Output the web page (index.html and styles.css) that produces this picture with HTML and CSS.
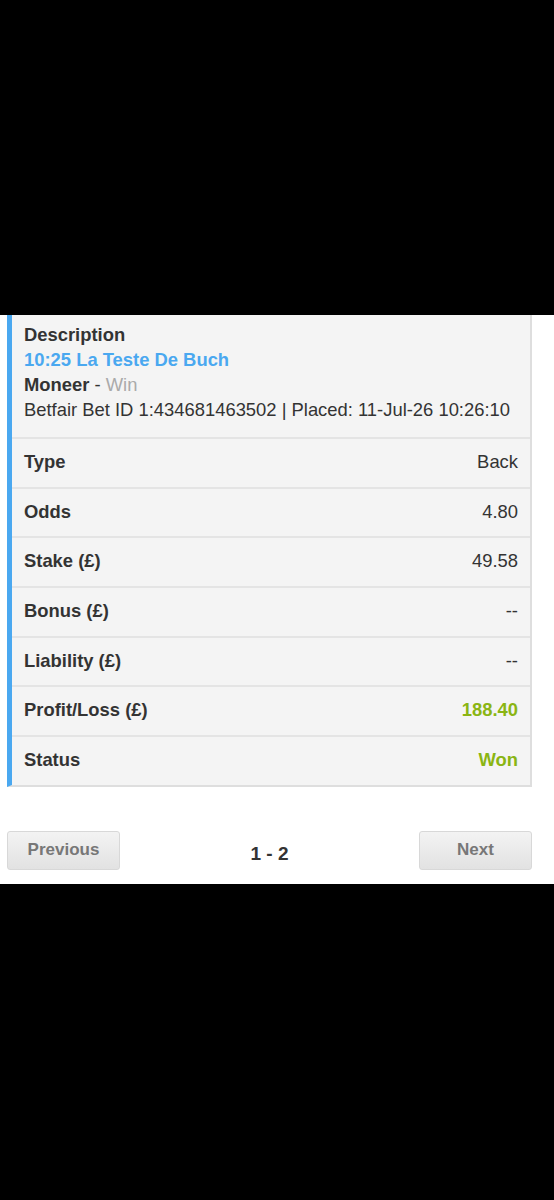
FILE: index.html
```html
<!DOCTYPE html>
<html>
<head>
<meta charset="utf-8">
<link rel="stylesheet" href="styles.css">
</head>
<body>
<div class="top"></div>
<div class="page">
  <div class="card">
    <div class="desc">
      <div class="desc-title">Description</div>
      <div class="event">10:25 La Teste De Buch</div>
      <div class="sel"><b>Moneer</b> - <span class="mkt">Win</span></div>
      <div class="betid">Betfair Bet ID 1:434681463502 | Placed: 11-Jul-26 10:26:10</div>
    </div>
    <div class="row"><span class="lbl">Type</span><span class="val">Back</span></div>
    <div class="row"><span class="lbl">Odds</span><span class="val">4.80</span></div>
    <div class="row"><span class="lbl">Stake (£)</span><span class="val">49.58</span></div>
    <div class="row"><span class="lbl">Bonus (£)</span><span class="val">--</span></div>
    <div class="row"><span class="lbl">Liability (£)</span><span class="val">--</span></div>
    <div class="row"><span class="lbl">Profit/Loss (£)</span><span class="val green">188.40</span></div>
    <div class="row"><span class="lbl">Status</span><span class="val green">Won</span></div>
  </div>
  <div class="pager">
    <button class="btn">Previous</button>
    <span class="count">1 - 2</span>
    <button class="btn">Next</button>
  </div>
</div>
<div class="bottom"></div>
</body>
</html>
```
FILE: styles.css
```css
html, body {
  margin: 0;
  padding: 0;
  background: #000;
}
body {
  font-family: "Liberation Sans", Arial, sans-serif;
  color: #333;
  width: 554px;
}
.top {
  height: 315px;
  background: #000;
}
.page {
  background: #fff;
  height: 569px;
  padding: 0 22px 0 7px;
  box-sizing: border-box;
}
.card {
  background: #f4f4f4;
  border-left: 5px solid #4aa8f0;
  border-right: 2px solid #dedede;
  border-bottom: 2px solid #dedede;
  width: 525px;
  box-sizing: border-box;
}
.desc {
  padding: 7px 12px 0 12px;
  height: 122px;
  box-sizing: border-box;
  font-size: 18.4px;
  line-height: 25px;
}
.desc-title {
  font-weight: bold;
}
.event {
  color: #4aa8f0;
  font-weight: bold;
}
.mkt {
  color: #aaa;
}
.betid {
  white-space: nowrap;
}
.row {
  display: flex;
  justify-content: space-between;
  align-items: center;
  height: 49.7px;
  border-top: 2px solid #e4e4e4;
  box-sizing: border-box;
  padding: 0 12px 2px 12px;
  font-size: 18.4px;
}
.lbl {
  font-weight: bold;
}
.val {
  color: #333;
}
.green {
  color: #8ab513;
  font-weight: bold;
}
.pager {
  display: flex;
  justify-content: space-between;
  align-items: center;
  margin-top: 44px;
  width: 525px;
}
.btn {
  width: 113px;
  height: 39px;
  border: 1px solid #d8d8d8;
  border-radius: 3px;
  background: linear-gradient(#f3f3f3, #e2e2e2);
  color: #777;
  font-family: "Liberation Sans", Arial, sans-serif;
  font-weight: bold;
  font-size: 17px;
  padding: 0;
}
.count {
  font-weight: bold;
  font-size: 19px;
  color: #333;
  margin-top: 8px;
}
.bottom {
  height: 316px;
  background: #000;
}
```
